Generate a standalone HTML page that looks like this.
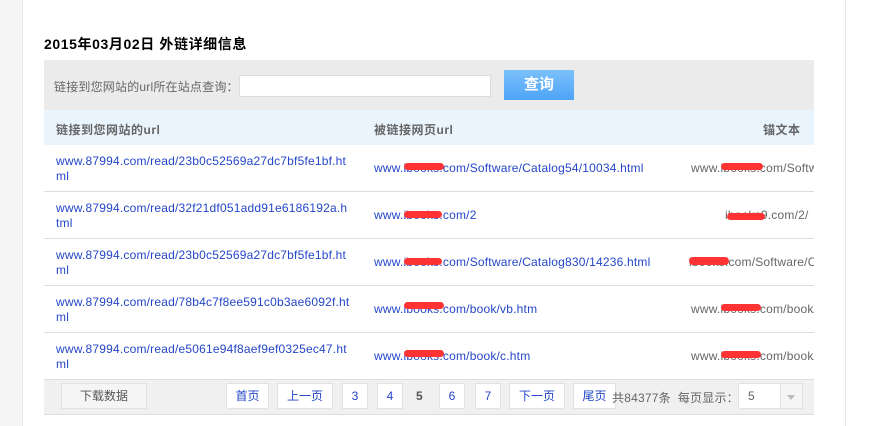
<!DOCTYPE html>
<html><head><meta charset="utf-8"><style>
*{margin:0;padding:0;box-sizing:border-box}
body{width:879px;height:426px;background:#fff;font-family:"Liberation Sans","Noto Sans CJK SC",sans-serif;font-size:12px;position:relative;overflow:hidden}
.a{position:absolute;white-space:nowrap}
.l{color:#2446c8;letter-spacing:0.2px}
.g{color:#666;letter-spacing:0.2px}
.hr{position:absolute;left:44px;width:770px;height:1px;background:#ddd}
.btn{position:absolute;top:383px;height:26px;background:#fff;border:1px solid #e2e2e2;color:#2446c8;text-align:center;line-height:24px}
.red{position:absolute;height:7px;background:#f33;border-radius:4px}
.clip{position:absolute;overflow:hidden;height:20px}
</style></head><body>
<div class="a" style="left:0;top:0;width:23px;height:426px;background:#f5f5f5;border-right:1px solid #e8e8e8"></div>
<div class="a" style="left:845px;top:0;width:1px;height:426px;background:#e8e8e8"></div>
<div class="a" style="left:44px;top:34px;font-size:14px;font-weight:bold;color:#000;letter-spacing:0.6px">2015年03月02日 外链详细信息</div>
<div class="a" style="left:44px;top:60px;width:770px;height:50px;background:#ebebeb"></div>
<div class="a g" style="left:54px;top:78px">链接到您网站的url所在站点查询：</div>
<div class="a" style="left:239px;top:75px;width:252px;height:22px;background:#fff;border:1px solid #ddd"></div>
<div class="a" style="left:504px;top:70px;width:70px;height:30px;background:linear-gradient(#7cc0fb,#4ea4f7);color:#fff;font-size:15px;font-weight:bold;text-align:center;line-height:30px">查询</div>
<div class="a" style="left:44px;top:110px;width:770px;height:35px;background:#eaf4fd"></div>
<div class="a g" style="left:56px;top:121px;font-weight:bold;letter-spacing:0.5px">链接到您网站的url</div>
<div class="a g" style="left:374px;top:121px;font-weight:bold;letter-spacing:0.5px">被链接网页url</div>
<div class="a g" style="left:763px;top:121px;font-weight:bold;letter-spacing:0.5px">锚文本</div>

<div class="a l" style="left:56px;top:154px;line-height:15px">www.87994.com/read/23b0c52569a27dc7bf5fe1bf.ht<br>ml</div>
<div class="a l" style="left:374px;top:161px">www.ibooks.com/Software/Catalog54/10034.html</div>
<div class="red" style="left:404px;top:163px;width:40px"></div>
<div class="clip g" style="left:691px;top:161px;width:123px">www.ibooks.com/Software</div>
<div class="red" style="left:721px;top:163px;width:42px"></div>
<div class="hr" style="top:191px"></div>

<div class="a l" style="left:56px;top:201px;line-height:15px">www.87994.com/read/32f21df051add91e6186192a.h<br>tml</div>
<div class="a l" style="left:374px;top:208px">www.ibooks.com/2</div>
<div class="red" style="left:404px;top:211px;width:38px"></div>
<div class="a g" style="left:725px;top:208px">ibooks9.com/2/</div>
<div class="red" style="left:727px;top:213px;width:38px"></div>
<div class="hr" style="top:238px"></div>

<div class="a l" style="left:56px;top:248px;line-height:15px">www.87994.com/read/23b0c52569a27dc7bf5fe1bf.ht<br>ml</div>
<div class="a l" style="left:374px;top:255px">www.ibooks.com/Software/Catalog830/14236.html</div>
<div class="red" style="left:404px;top:258px;width:38px"></div>
<div class="clip g" style="left:689px;top:255px;width:125px">ibooks.com/Software/Catalog</div>
<div class="red" style="left:689px;top:257px;width:40px;height:8px"></div>
<div class="hr" style="top:285px"></div>

<div class="a l" style="left:56px;top:295px;line-height:15px">www.87994.com/read/78b4c7f8ee591c0b3ae6092f.ht<br>ml</div>
<div class="a l" style="left:374px;top:302px">www.ibooks.com/book/vb.htm</div>
<div class="red" style="left:404px;top:302px;width:40px"></div>
<div class="clip g" style="left:691px;top:302px;width:123px">www.ibooks.com/book/vb</div>
<div class="red" style="left:721px;top:304px;width:40px"></div>
<div class="hr" style="top:332px"></div>

<div class="a l" style="left:56px;top:342px;line-height:15px">www.87994.com/read/e5061e94f8aef9ef0325ec47.ht<br>ml</div>
<div class="a l" style="left:374px;top:349px">www.ibooks.com/book/c.htm</div>
<div class="red" style="left:404px;top:350px;width:40px"></div>
<div class="clip g" style="left:691px;top:349px;width:123px">www.ibooks.com/book/c</div>
<div class="red" style="left:721px;top:351px;width:40px"></div>

<div class="a" style="left:44px;top:379px;width:770px;height:36px;background:#f0f0f0;border-top:1px solid #ddd;border-bottom:1px solid #ddd"></div>
<div class="btn" style="left:61px;width:86px;background:#f5f5f5;color:#555">下载数据</div>
<div class="btn" style="left:226px;width:43px">首页</div>
<div class="btn" style="left:277px;width:56px">上一页</div>
<div class="btn" style="left:342px;width:26px">3</div>
<div class="btn" style="left:377px;width:26px">4</div>
<div class="a" style="left:416px;top:389px;color:#555;font-weight:bold">5</div>
<div class="btn" style="left:439px;width:26px">6</div>
<div class="btn" style="left:475px;width:26px">7</div>
<div class="btn" style="left:509px;width:56px">下一页</div>
<div class="btn" style="left:573px;width:43px">尾页</div>
<div class="a g" style="left:612px;top:389px">共84377条&nbsp; 每页显示：</div>
<div class="a" style="left:738px;top:383px;width:65px;height:26px;background:#fff;border:1px solid #e2e2e2"></div>
<div class="a" style="left:780px;top:384px;width:22px;height:24px;background:#f5f5f5;border-left:1px solid #e2e2e2"></div>
<div class="a g" style="left:748px;top:389px">5</div>
<div class="a" style="left:787px;top:395px;width:0;height:0;border-left:4px solid transparent;border-right:4px solid transparent;border-top:5px solid #bbb"></div>
</body></html>
